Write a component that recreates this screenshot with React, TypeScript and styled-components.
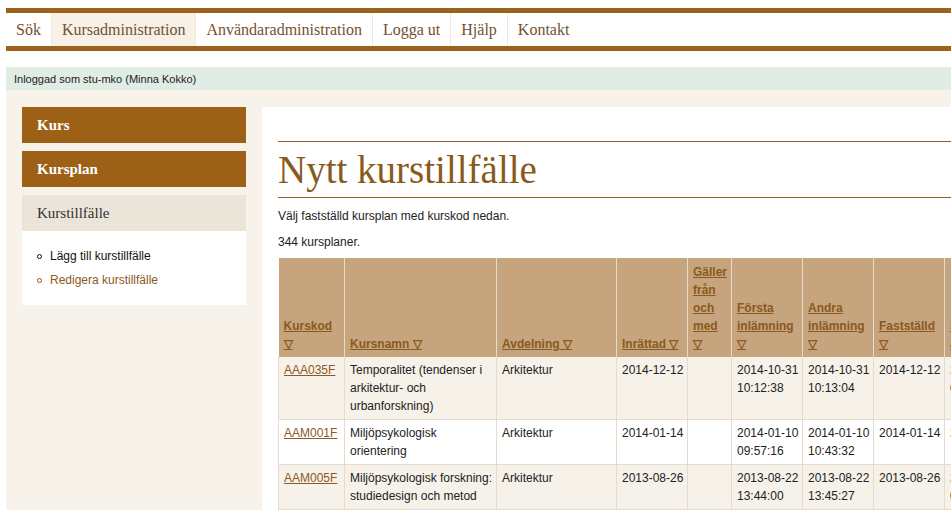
import React from "react";
import styled, { createGlobalStyle } from "styled-components";

const Global = createGlobalStyle`
  html, body { margin: 0; padding: 0; background: #fff; overflow: hidden; }
  body { font-family: "Liberation Sans", Arial, sans-serif; }
`;

const Page = styled.div`
  padding: 8px 0 0 6px;
  width: 1300px;
`;

const Nav = styled.nav`
  display: flex;
  border-top: 5px solid #9c6219;
  border-bottom: 5px solid #9c6219;
  height: 33px;
`;

const NavItem = styled.a<{ $active?: boolean; $last?: boolean }>`
  display: flex;
  align-items: center;
  padding: 0 10px;
  font-family: "Liberation Serif", "Times New Roman", serif;
  font-size: 16px;
  color: #74502f;
  background: ${(p) => (p.$active ? "#f7f1e8" : "#fff")};
  border-right: ${(p) => (p.$last ? "none" : "1px solid #efe8dd")};
  text-decoration: none;
`;

const LoginBar = styled.div`
  margin-top: 16px;
  height: 23px;
  background: #dfede5;
  display: flex;
  align-items: center;
  padding-left: 8px;
  font-size: 11px;
  color: #222;
`;

const Main = styled.div`
  background: #f7f2ea;
  display: flex;
  align-items: flex-start;
  gap: 16px;
  padding: 17px 0 0 16px;
  min-height: 500px;
`;

const Sidebar = styled.aside`
  width: 224px;
  flex: none;
  display: flex;
  flex-direction: column;
`;

const SideHead = styled.div<{ $open?: boolean }>`
  height: 36px;
  display: flex;
  align-items: center;
  padding-left: 15px;
  margin-bottom: ${(p) => (p.$open ? "0" : "8px")};
  background: ${(p) => (p.$open ? "#ebe5d9" : "#9c6016")};
  color: ${(p) => (p.$open ? "#333" : "#fff")};
  font-family: "Liberation Serif", "Times New Roman", serif;
  font-weight: ${(p) => (p.$open ? "normal" : "bold")};
  font-size: 15px;
`;

const SubList = styled.ul`
  margin: 0;
  background: #fff;
  list-style: none;
  padding: 13px 0 13px 15px;
`;

const SubItem = styled.li<{ $current?: boolean }>`
  display: flex;
  align-items: center;
  gap: 8px;
  font-size: 12px;
  line-height: 24px;
  color: ${(p) => (p.$current ? "#111" : "#8b5a22")};
  &::before {
    content: "";
    width: 3px;
    height: 3px;
    border: 1.5px solid ${(p) => (p.$current ? "#111" : "#8b5a22")};
    border-radius: 50%;
    flex: none;
  }
`;

const Content = styled.section`
  background: #fff;
  flex: 1;
  padding: 34px 0 0 16px;
  min-height: 420px;
`;

const Title = styled.h1`
  margin: 0;
  border-top: 1px solid #8a5e28;
  border-bottom: 1px solid #8a5e28;
  font-family: "Liberation Serif", "Times New Roman", serif;
  font-weight: normal;
  font-size: 39px;
  line-height: 54px;
  color: #8a5a1c;
  padding-top: 1px;
`;

const Para = styled.p`
  margin: 10px 0 0;
  font-size: 12px;
  line-height: 16px;
  color: #222;
`;

const Table = styled.table`
  margin-top: 8px;
  border-collapse: collapse;
  table-layout: fixed;
  width: 746px;
  font-size: 12px;
  line-height: 18px;
  color: #222;
`;

const Th = styled.th<{ $w: number }>`
  width: ${(p) => p.$w}px;
  box-sizing: border-box;
  background: #c6a47d;
  text-align: left;
  vertical-align: bottom;
  padding: 5px 4px 4px 5px;
  border-right: 1px solid #e6dccd;
  font-weight: bold;
`;

const SortLink = styled.a`
  color: #8a5a1e;
  text-decoration: underline;
`;

const Tr = styled.tr<{ $odd: boolean }>`
  background: ${(p) => (p.$odd ? "#f6f1e9" : "#fff")};
`;

const Td = styled.td<{ $nowrap?: boolean }>`
  vertical-align: top;
  padding: 4px 2px 4px 5px;
  border: 1px solid #e6dccd;
  border-top: none;
  white-space: ${(p) => (p.$nowrap ? "nowrap" : "normal")};
  overflow: hidden;
`;

const TimePart = styled.span`
  display: block;
`;

const CodeLink = styled.a`
  color: #8a5a1e;
  text-decoration: underline;
`;

const cols: [string, number][] = [
  ["Kurskod", 66],
  ["Kursnamn", 152],
  ["Avdelning", 120],
  ["Inrättad", 71],
  ["Gäller från och med", 44],
  ["Första inlämning", 71],
  ["Andra inlämning", 71],
  ["Fastställd", 71],
  ["Senast ändrad", 80],
];

const rows = [
  ["AAA035F", "Temporalitet (tendenser i arkitektur- och urbanforskning)", "Arkitektur", "2014-12-12", "", "2014-10-31 10:12:38", "2014-10-31 10:13:04", "2014-12-12", "2014-12-12 09:14:22"],
  ["AAM001F", "Miljöpsykologisk orientering", "Arkitektur", "2014-01-14", "", "2014-01-10 09:57:16", "2014-01-10 10:43:32", "2014-01-14", "2014-01-14"],
  ["AAM005F", "Miljöpsykologisk forskning: studiedesign och metod", "Arkitektur", "2013-08-26", "", "2013-08-22 13:44:00", "2013-08-22 13:45:27", "2013-08-26", "2013-08-26 08:30:12"],
];

function Cell({ value, index }: { value: string; index: number }) {
  if (index === 0) {
    return (
      <Td>
        <CodeLink>{value}</CodeLink>
      </Td>
    );
  }
  if (index >= 3) {
    const [date, time] = value.split(" ");
    return (
      <Td $nowrap>
        {date}
        {time && <TimePart>{time}</TimePart>}
      </Td>
    );
  }
  return <Td>{value}</Td>;
}

export default function App() {
  return (
    <>
      <Global />
      <Page>
        <Nav>
          <NavItem>Sök</NavItem>
          <NavItem $active>Kursadministration</NavItem>
          <NavItem>Användaradministration</NavItem>
          <NavItem>Logga ut</NavItem>
          <NavItem>Hjälp</NavItem>
          <NavItem $last>Kontakt</NavItem>
        </Nav>
        <LoginBar>Inloggad som stu-mko (Minna Kokko)</LoginBar>
        <Main>
          <Sidebar>
            <SideHead>Kurs</SideHead>
            <SideHead>Kursplan</SideHead>
            <SideHead $open>Kurstillfälle</SideHead>
            <SubList>
              <SubItem $current>Lägg till kurstillfälle</SubItem>
              <SubItem>Redigera kurstillfälle</SubItem>
            </SubList>
          </Sidebar>
          <Content>
            <Title>Nytt kurstillfälle</Title>
            <Para>Välj fastställd kursplan med kurskod nedan.</Para>
            <Para>344 kursplaner.</Para>
            <Table>
              <thead>
                <tr>
                  {cols.map(([name, w]) => (
                    <Th key={name} $w={w}>
                      <SortLink>{name} ▽</SortLink>
                    </Th>
                  ))}
                </tr>
              </thead>
              <tbody>
                {rows.map((r, i) => (
                  <Tr key={r[0]} $odd={i % 2 === 0}>
                    {r.map((c, j) => (
                      <Cell key={j} value={c} index={j} />
                    ))}
                  </Tr>
                ))}
              </tbody>
            </Table>
          </Content>
        </Main>
      </Page>
    </>
  );
}
